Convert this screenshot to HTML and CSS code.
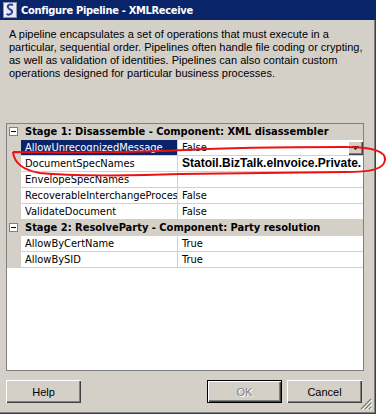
FILE: index.html
```html
<!DOCTYPE html>
<html>
<head>
<meta charset="utf-8">
<link rel="stylesheet" href="styles.css">
</head>
<body>
<div class="window">
  <div class="titlebar">
    <svg class="appicon" width="16" height="16" viewBox="0 0 16 16">
      <rect x="1.5" y="0.5" width="13" height="15" fill="#e8e8f0" stroke="#9090a8"/>
      <path d="M11 3 C8 2 5 3 6 5.5 C7 8 11 7.5 10 10.5 C9 13 6 13 4.5 12" fill="none" stroke="#2a3c9a" stroke-width="2"/>
      <path d="M3 2 L3 14" stroke="#ffffff" stroke-width="1"/>
    </svg>
    <span class="title">Configure Pipeline - XMLReceive</span>
  </div>
  <p class="desc">A pipeline encapsulates a set of operations that must execute in a<br>particular, sequential order. Pipelines often handle file coding or crypting,<br>as well as validation of identities. Pipelines can also contain custom<br>operations designed for particular business processes.</p>
  <div class="grid">
    <div class="row cat"><span class="gutter"><span class="minus"></span></span><span class="cattext">Stage 1: Disassemble - Component: XML disassembler</span></div>
    <div class="row sel"><span class="gutter"></span><span class="name">AllowUnrecognizedMessage</span><span class="value">False<span class="drop"><svg width="7" height="4" viewBox="0 0 7 4"><path d="M0 0 H7 L3.5 4 Z" fill="#000"/></svg></span></span></div>
    <div class="row"><span class="gutter"></span><span class="name">DocumentSpecNames</span><span class="value strong">Statoil.BizTalk.eInvoice.Private.</span></div>
    <div class="row"><span class="gutter"></span><span class="name">EnvelopeSpecNames</span><span class="value"></span></div>
    <div class="row"><span class="gutter"></span><span class="name">RecoverableInterchangeProces</span><span class="value">False</span></div>
    <div class="row"><span class="gutter"></span><span class="name">ValidateDocument</span><span class="value">False</span></div>
    <div class="row cat"><span class="gutter"><span class="minus"></span></span><span class="cattext">Stage 2: ResolveParty - Component: Party resolution</span></div>
    <div class="row"><span class="gutter"></span><span class="name">AllowByCertName</span><span class="value">True</span></div>
    <div class="row"><span class="gutter"></span><span class="name">AllowBySID</span><span class="value">True</span></div>
  </div>
  <div class="buttons">
    <button class="btn">Help</button>
    <span class="spacer"></span>
    <button class="btn default" disabled>OK</button>
    <button class="btn">Cancel</button>
  </div>
  <svg class="grip" width="12" height="12" viewBox="0 0 12 12">
    <path d="M11 1 L1 11 M11 5 L5 11 M11 9 L9 11" stroke="#808080" stroke-width="1.2"/>
    <path d="M12 2 L2 12 M12 6 L6 12 M12 10 L10 12" stroke="#ffffff" stroke-width="1"/>
  </svg>
  <svg class="annot" width="388" height="200" viewBox="0 0 388 200">
    <path d="M13 152 C70 153 150 152 185 150 C240 147 300 147 345 147 C372 147 386 151 385 160 C384 169 372 172 345 172 C280 173 220 173 180 174 C130 176 70 176 40 173 C22 170 14 162 13 152" fill="none" stroke="#ee1111" stroke-width="2"/>
  </svg>
</div>
</body>
</html>
```

FILE: styles.css
```css
* { box-sizing: border-box; }
html, body { margin: 0; padding: 0; }
body {
  width: 388px;
  height: 414px;
  background: #ffffff;
  font-family: "Liberation Sans", Arial, sans-serif;
  font-size: 11px;
  overflow: hidden;
}
.window {
  position: relative;
  width: 376px;
  height: 414px;
  background: #d4d0c8;
  box-shadow: inset -1px -1px 0 #404040, inset -2px -2px 0 #808080;
  display: flex;
  flex-direction: column;
}
.titlebar {
  height: 20px;
  background: #0a246a;
  display: flex;
  align-items: center;
  padding-left: 2px;
  gap: 3px;
}
.appicon { flex: none; }
.title {
  color: #ffffff;
  font-family: "DejaVu Sans", Verdana, sans-serif;
  font-stretch: condensed;
  font-weight: bold;
  font-size: 11px;
  letter-spacing: -0.3px;
  white-space: nowrap;
}
.desc {
  margin: 0;
  padding: 8px 9px 0 9px;
  height: 103px;
  line-height: 13px;
  color: #000;
  white-space: nowrap;
}
.grid {
  margin-left: 6px;
  width: 358px;
  height: 248px;
  border: 1px solid #808080;
  background: #ffffff;
  font-family: "DejaVu Sans", Verdana, sans-serif;
  font-stretch: condensed;
  font-size: 11px;
}
.row {
  display: flex;
  height: 16px;
  border-bottom: 1px solid #d4d0c8;
  line-height: 15px;
  white-space: nowrap;
}
.gutter {
  flex: none;
  width: 14px;
  background: #d4d0c8;
  display: flex;
  align-items: center;
}
.name {
  flex: none;
  width: 157px;
  padding-left: 4px;
  border-right: 1px solid #d4d0c8;
  overflow: hidden;
  color: #000;
}
.value {
  flex: 1;
  padding-left: 4px;
  overflow: hidden;
  position: relative;
  display: flex;
  align-items: center;
}
.value.strong {
  font-family: "Liberation Sans", Arial, sans-serif;
  font-stretch: normal;
  font-weight: bold;
  font-size: 12px;
}
.sel .name {
  background: #0a246a;
  color: #ffffff;
}
.drop {
  margin-left: auto;
  margin-right: 0;
  width: 15px;
  height: 14px;
  background: #d4d0c8;
  box-shadow: inset 1px 1px 0 #ffffff, inset -1px -1px 0 #404040, inset -2px -2px 0 #808080;
  display: flex;
  align-items: center;
  justify-content: center;
}
.cat {
  background: #d4d0c8;
  border-bottom-color: #d4d0c8;
}
.cattext {
  padding-left: 4px;
  font-weight: bold;
  color: #000;
}
.minus {
  margin-left: 2px;
  width: 9px;
  height: 9px;
  border: 1px solid #808080;
  background: #ffffff;
  position: relative;
}
.minus::after {
  content: "";
  position: absolute;
  left: 1px;
  top: 3px;
  width: 5px;
  height: 1px;
  background: #000;
}
.buttons {
  display: flex;
  margin-top: 9px;
  padding: 0 14px 0 6px;
  gap: 5px;
}
.spacer { flex: 1; }
.btn {
  width: 75px;
  height: 23px;
  margin: 0;
  padding: 0;
  border: none;
  background: #d4d0c8;
  font-family: "Liberation Sans", Arial, sans-serif;
  font-size: 11px;
  color: #000;
  box-shadow: inset 1px 1px 0 #ffffff, inset -1px -1px 0 #404040, inset -2px -2px 0 #808080;
}
.btn.default {
  color: #808080;
  text-shadow: 1px 1px 0 #ffffff;
  box-shadow: inset 0 0 0 1px #000, inset 2px 2px 0 #ffffff, inset -2px -2px 0 #404040, inset -3px -3px 0 #808080;
}
.grip {
  position: absolute;
  right: 4px;
  bottom: 4px;
}
.annot {
  position: absolute;
  left: 0;
  top: 0;
  pointer-events: none;
}
```
